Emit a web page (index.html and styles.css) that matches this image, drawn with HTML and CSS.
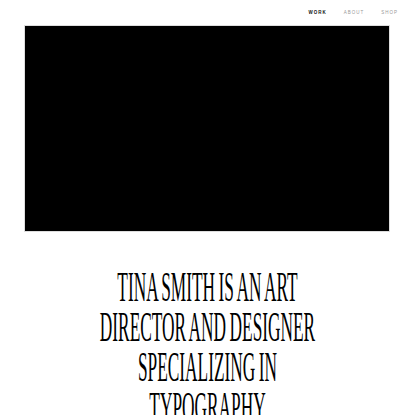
FILE: index.html
```html
<!DOCTYPE html>
<html lang="en">
<head>
<meta charset="utf-8">
<title>Tina Smith</title>
<link rel="stylesheet" href="styles.css">
</head>
<body>
<header class="site-header">
  <nav class="nav">
    <a class="nav-link active" href="#">WORK</a>
    <a class="nav-link" href="#">ABOUT</a>
    <a class="nav-link" href="#">SHOP</a>
  </nav>
</header>
<main class="main">
  <div class="hero"></div>
  <h1 class="intro">TINA SMITH IS AN ART<br>DIRECTOR AND DESIGNER<br>SPECIALIZING IN<br>TYPOGRAPHY</h1>
</main>
</body>
</html>
```
FILE: styles.css
```css
html, body {
  margin: 0;
  padding: 0;
  background: #fff;
  overflow: hidden;
}
body {
  width: 415px;
  height: 415px;
  font-family: "Liberation Sans", Arial, sans-serif;
}
.site-header {
  height: 25px;
  display: flex;
  justify-content: flex-end;
  align-items: flex-start;
}
.nav {
  display: flex;
  gap: 17px;
  padding: 10px 17px 0 0;
}
.nav-link {
  font-size: 4.5px;
  letter-spacing: 1px;
  color: #999;
  text-decoration: none;
  line-height: 6px;
}
.nav-link.active {
  color: #111;
  font-weight: bold;
}
.main {
  padding: 0 25px 0 24px;
}
.hero {
  height: 205px;
  background: #000;
  border: 1px solid #ddd;
}
.intro {
  width: 250%;
  margin: 35px 0 0 -75%;
  font-family: "Liberation Serif", "Times New Roman", serif;
  font-weight: normal;
  font-size: 42px;
  line-height: 40px;
  text-align: center;
  white-space: nowrap;
  color: #000;
  letter-spacing: 0;
  word-spacing: -2px;
  transform: scaleX(0.412);
  transform-origin: center top;
}
```
